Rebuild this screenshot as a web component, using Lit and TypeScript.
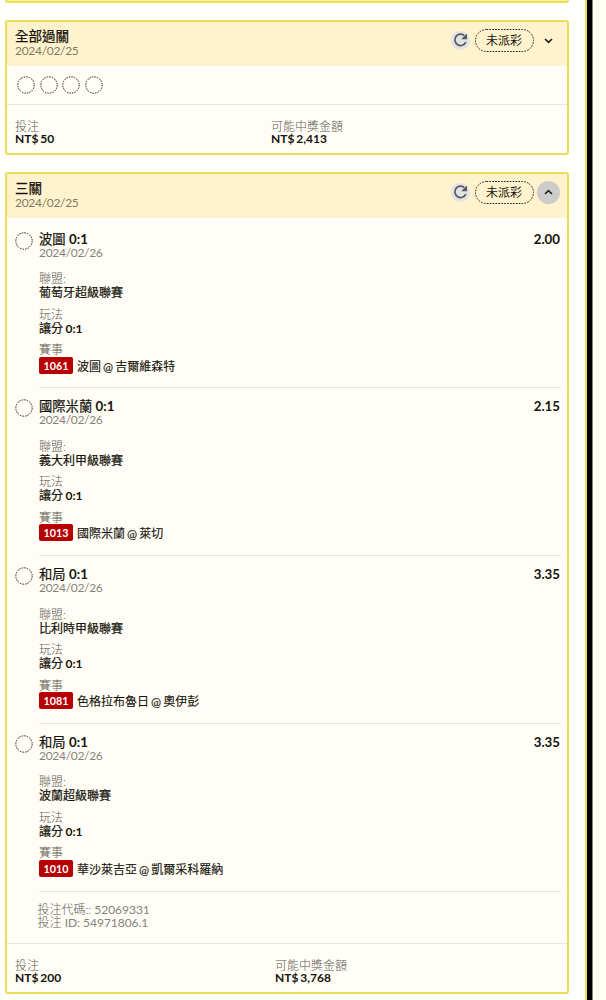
import { LitElement, html, css, svg } from "lit";
import { customElement, property } from "lit/decorators.js";

interface Leg {
  team: string;
  odds: string;
  league: string;
  code: string;
  match: string;
}

const LEGS: Leg[] = [
  { team: "波圖", odds: "2.00", league: "葡萄牙超級聯賽", code: "1061", match: "波圖 @ 吉爾維森特" },
  { team: "國際米蘭", odds: "2.15", league: "義大利甲級聯賽", code: "1013", match: "國際米蘭 @ 萊切" },
  { team: "和局", odds: "3.35", league: "比利時甲級聯賽", code: "1081", match: "色格拉布魯日 @ 奧伊彭" },
  { team: "和局", odds: "3.35", league: "波蘭超級聯賽", code: "1010", match: "華沙萊吉亞 @ 凱爾采科羅納" },
];

const ring = svg`<circle cx="9" cy="9" r="8.2" fill="none" stroke="#222" stroke-width="1" stroke-dasharray="1.5 1.08"/>`;

@customElement("bet-header")
class BetHeader extends LitElement {
  @property() heading = "";
  @property() date = "";
  @property({ type: Boolean }) open = false;

  static styles = css`
    :host { display: flex; height: 43.5px; box-sizing: border-box; padding: 7px 7px 0 8px; background: #fff2cc; justify-content: space-between; }
    .title { font-size: 13.5px; line-height: 14px; height: 14px; color: #15130c; white-space: nowrap; -webkit-text-stroke: 0.25px #15130c; }
    .date { font-size: 12px; line-height: 15px; color: #817a66; letter-spacing: var(--date-spacing); }
    .tools { display: flex; align-items: center; height: 23px; }
    .reload { width: 19px; height: 19px; border-radius: 50%; background: #e4e2e1; display: block; margin-right: 5px; }
    .status { box-sizing: border-box; width: 59px; height: 23px; display: block; position: relative; margin-right: 3.5px; }
    .status svg { display: block; }
    .status span { position: absolute; inset: 0; text-align: center; font-size: 12px; line-height: 23px; color: #15130c; }
    .toggle { width: 23px; height: 23px; border-radius: 50%; display: block; }
    .toggle.on { background: #cdcccb; }
  `;

  render() {
    return html`
      <div>
        <div class="title">${this.heading}</div>
        <div class="date">${this.date}</div>
      </div>
      <div class="tools">
        <svg class="reload" viewBox="0 0 19 19">
          <path d="M13.4 4.6A5.7 5.7 0 1 0 14.8 11.2" fill="none" stroke="#555762" stroke-width="1.7"/>
          <path d="M16 2.4v5.8h-5.8z" fill="#555762"/>
        </svg>
        <div class="status">
          <svg width="59" height="23"><rect x=".5" y=".5" width="58" height="22" rx="11" fill="none" stroke="#222" stroke-dasharray="1.7 1.2"/></svg>
          <span>未派彩</span>
        </div>
        <svg class="toggle ${this.open ? "on" : ""}" viewBox="0 0 23 23">
          <path d=${this.open ? "M8 13l3.5-3.4L15 13" : "M8 10l3.5 3.4L15 10"} fill="none" stroke="#222" stroke-width="1.7"/>
        </svg>
      </div>
    `;
  }
}

@customElement("bet-footer")
class BetFooter extends LitElement {
  @property() stake = "";
  @property() payout = "";

  static styles = css`
    :host { display: flex; border-top: 1px solid #e9e5e0; padding: 15px 8px 0; height: 34px; font-size: 12px; }
    .stake { width: var(--stake-width, 256px); }
    .label { line-height: 13px; height: 13px; color: #5c5954; font-weight: 300; }
    .value { line-height: 12px; height: 12px; font-weight: 700; color: #15130c; word-spacing: -1px; }
  `;

  render() {
    return html`
      <div class="stake"><div class="label">投注</div><div class="value">${this.stake}</div></div>
      <div><div class="label">可能中獎金額</div><div class="value">${this.payout}</div></div>
    `;
  }
}

@customElement("app-root")
class AppRoot extends LitElement {
  static styles = css`
    :host { --date-spacing: -0.3px; display: flex; height: 1000px; overflow: hidden; background: #fffffc; color: #15130c; font-family: Lato, "Noto Sans CJK TC", sans-serif; font-size: 12px; }
    .list { width: 585px; box-sizing: border-box; padding: 0 16px 0 5px; }
    .card { box-sizing: border-box; border: 2px solid #ebdd57; border-radius: 3px; background: #fffdf5; overflow: hidden; }
    .previous { height: 3px; border-top: 0; background: #fbf3a0; border-radius: 0 0 3px 3px; }
    .all { height: 135px; margin-top: 17px; }
    .three { height: 822px; margin-top: 17px; --stake-width: 260px; }
    .rings { display: flex; gap: 4.7px; height: 38.5px; box-sizing: border-box; padding: 10px 0 0 10px; }
    .ring { width: 18px; height: 18px; display: block; flex: none; }
    .leg { display: flex; height: 167.75px; padding: 0 6px 0 8px; }
    .leg .ring { margin-top: 14px; }
    .body { flex: 1; margin-left: 6px; box-sizing: border-box; padding-top: 14px; }
    .legs { height: 673.5px; }
    .inner { height: 155.75px; border-bottom: 1px solid #e9e5e0; }
    .top { display: flex; justify-content: space-between; height: 14px; line-height: 14px; font-size: 13.3px; font-weight: 700; white-space: nowrap; padding-right: 1px; }
    .name { letter-spacing: 0.1px; }
    .cjk { font-weight: 400; letter-spacing: 0; -webkit-text-stroke: 0.22px #15130c; }
    .date { font-size: 12px; line-height: 14px; height: 14px; color: #85827b; letter-spacing: var(--date-spacing); }
    .label { line-height: 14px; height: 14px; color: #5c5954; font-weight: 300; margin-top: 7.5px; }
    .label.first { margin-top: 12.5px; }
    .value { line-height: 14px; height: 14px; font-weight: 700; word-spacing: -0.5px; }
    .match { display: flex; align-items: center; height: 16px; white-space: nowrap; word-spacing: -1px; -webkit-text-stroke: 0.12px #15130c; }
    .code { width: 34px; height: 17px; line-height: 17px; border-radius: 2px; background: #b60003; color: #fff; text-align: center; font-size: 10.7px; font-weight: 700; margin-right: 4px; -webkit-text-stroke: 0; }
    .ids { height: 51.5px; box-sizing: border-box; padding: 12px 0 0 30.5px; line-height: 13px; color: #5c5954; font-weight: 300; letter-spacing: -0.03px; }
    .num { font-weight: 400; color: #85827b; }
    .edge { width: 2px; background: #ebdd57; }
    .bar { width: 5px; background: #000; border-right: 1px solid #85837c; }
    .rest { flex: 1; background: #fffef5; }
  `;

  private leg(l: Leg) {
    return html`
      <div class="leg">
        <svg class="ring" viewBox="0 0 18 18">${ring}</svg>
        <div class="body">
          <div class="inner">
            <div class="top"><span class="name"><span class="cjk">${l.team}</span> 0:1</span><span>${l.odds}</span></div>
            <div class="date">2024/02/26</div>
            <div class="label first">聯盟:</div>
            <div class="value"><span class="cjk">${l.league}</span></div>
            <div class="label">玩法</div>
            <div class="value"><span class="cjk">讓分</span> 0:1</div>
            <div class="label">賽事</div>
            <div class="match"><span class="code">${l.code}</span><span>${l.match}</span></div>
          </div>
        </div>
      </div>
    `;
  }

  render() {
    return html`
      <main class="list">
        <div class="card previous"></div>
        <section class="card all">
          <bet-header heading="全部過關" date="2024/02/25"></bet-header>
          <div class="rings">
            ${[0, 1, 2, 3].map(() => html`<svg class="ring" viewBox="0 0 18 18">${ring}</svg>`)}
          </div>
          <bet-footer stake="NT$ 50" payout="NT$ 2,413"></bet-footer>
        </section>
        <section class="card three">
          <bet-header heading="三關" date="2024/02/25" open></bet-header>
          <div class="legs">${LEGS.map((l) => this.leg(l))}</div>
          <div class="ids"><div>投注代碼:: <span class="num">52069331</span></div><div>投注 <span class="num">ID: 54971806.1</span></div></div>
          <bet-footer stake="NT$ 200" payout="NT$ 3,768"></bet-footer>
        </section>
      </main>
      <div class="edge"></div>
      <div class="bar"></div>
      <div class="rest"></div>
    `;
  }
}
